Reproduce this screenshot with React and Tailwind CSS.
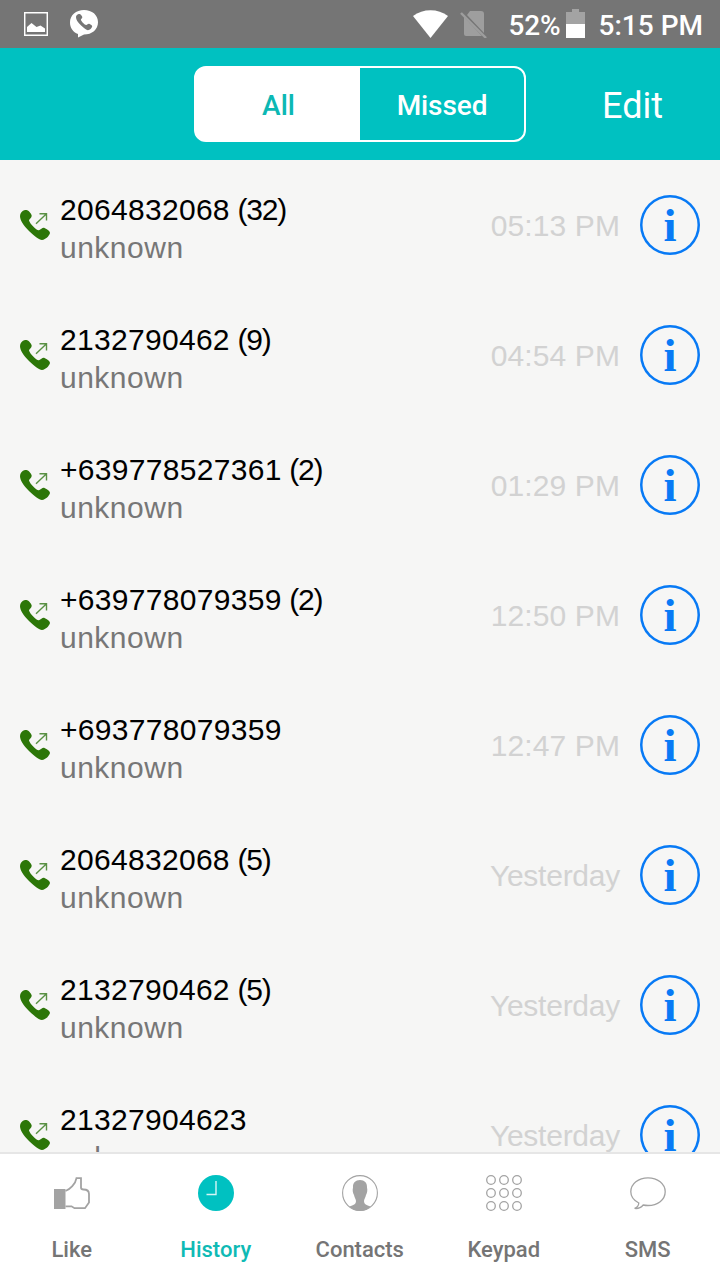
// src/App.jsx
import clsx from 'clsx'

const calls = [
  { number: '2064832068', count: 32, name: 'unknown', time: '05:13 PM' },
  { number: '2132790462', count: 9, name: 'unknown', time: '04:54 PM' },
  { number: '+639778527361', count: 2, name: 'unknown', time: '01:29 PM' },
  { number: '+639778079359', count: 2, name: 'unknown', time: '12:50 PM' },
  { number: '+693778079359', name: 'unknown', time: '12:47 PM' },
  { number: '2064832068', count: 5, name: 'unknown', time: 'Yesterday' },
  { number: '2132790462', count: 5, name: 'unknown', time: 'Yesterday' },
  { number: '21327904623', name: 'unknown', time: 'Yesterday' }
]

const HANDSET =
  'M5 0C2 .8 0 3 0 6C0 10 3 15 9 21C15 26.5 19 30 22 30C26 29.5 29 26 30 23C30 21 28 20 24.5 18C22.5 17.3 21 19.5 19 20.2C17 21 10 14 9 10.5C9.3 9 12 7.5 11.7 5.5C11 3 8 0 6.5 0Z'

function LikeIcon() {
  return (
    <svg className="h-9 w-9" viewBox="0 0 36 36" fill="none">
      <path d="M0 14h11.5v20H0z" fill="#a3a3a3" />
      <path
        d="M11.5 16C16 14.5 21.5 9 22.5 3.2H27V12.5Q27 14.5 29.5 14.5Q35 14.5 35 19V27.5L31 33.2H20.5L17.5 31.3H11.5"
        stroke="#a3a3a3"
        strokeWidth="1.8"
      />
    </svg>
  )
}

function HistoryIcon() {
  return (
    <svg className="h-9 w-9" viewBox="0 0 36 36" fill="none">
      <circle cx="18" cy="18" r="18" fill="#00c1c1" />
      <path d="M18 6v13.5H8.5" stroke="#d5f5f5" strokeWidth="1.4" />
    </svg>
  )
}

function ContactsIcon() {
  return (
    <svg className="h-9 w-9" viewBox="0 0 36 36" fill="none">
      <circle cx="18" cy="18" r="17.4" stroke="#a3a3a3" strokeWidth="1.1" />
      <path
        d="M18 5C13.5 5 10.8 7.8 11 12.5C10.2 15.5 11 18 12 20C12.5 22.5 13.8 24 14 26C13.8 29.5 11.5 30 7.5 31.5Q12 36 18 36T28.5 31.5C24.5 30 22.2 29.5 22 26C22.2 24 23.5 22.5 24 20C25 18 25.8 15.5 25 12.5C25.2 7.8 22.5 5 18 5Z"
        fill="#a3a3a3"
      />
    </svg>
  )
}

function KeypadIcon() {
  return (
    <svg className="h-9 w-9" viewBox="0 0 36 36" fill="none" stroke="#a3a3a3" strokeWidth="1.3">
      {[5, 18, 31].map(cy => [5, 18, 31].map(cx => <circle key={`${cx}-${cy}`} cx={cx} cy={cy} r="4.3" />))}
    </svg>
  )
}

function SmsIcon() {
  return (
    <svg className="h-9 w-9" viewBox="0 0 36 36" fill="none" stroke="#a3a3a3" strokeWidth="1.3">
      <path d="M18 2.8C8.5 2.8 .8 8.8 .8 16.8C.8 21.3 3.8 25.5 8.8 28C8.6 30.5 7.2 32.5 4.6 33.4C8.5 34 11.5 32 13.2 30C15 30.4 16.5 30.5 18 30.5C27.5 30.5 35.2 25 35.2 16.8C35.2 8.8 27.5 2.8 18 2.8Z" />
    </svg>
  )
}

const tabs = [
  { label: 'Like', icon: LikeIcon },
  { label: 'History', icon: HistoryIcon, active: true },
  { label: 'Contacts', icon: ContactsIcon },
  { label: 'Keypad', icon: KeypadIcon },
  { label: 'SMS', icon: SmsIcon }
]

function StatusBar() {
  return (
    <div className="flex h-12 shrink-0 items-center bg-[#757575] pr-[17px] pl-6 text-[28px] font-medium text-white">
      <svg className="h-6 w-6" viewBox="0 0 24 24" fill="none">
        <path d="M.7.7h22.6v22.6H.7z" stroke="#fff" strokeWidth="1.5" />
        <path d="M3 20v-5l4.5-4 5 4 4-1.5 4.5 3V20z" fill="#fff" />
      </svg>
      <svg className="ml-[22px] h-7 w-7" viewBox="0 0 28 28">
        <path d="M14 0C6 0 0 5 0 12.5C0 18 3 22 8 24V27.5L14 24.5C22 24.5 28 19.5 28 12.2S22 0 14 0Z" fill="#fff" />
        <path d={HANDSET} fill="#757575" transform="translate(6 4) scale(.54)" />
      </svg>
      <svg className="ml-auto h-7 w-[35px]" viewBox="0 0 35 28">
        <path d="M0 6C10-1.8 25-1.8 35 6L17.5 28z" fill="#fff" />
      </svg>
      <svg className="ml-3 h-7 w-[27px]" viewBox="0 0 27 28">
        <path d="M10 1h11q3 0 3 3v19L7 5zM4 7l18 19H6q-2 0-2-2z" fill="#9e9e9e" />
        <path d="M1 3l25 25" stroke="#9e9e9e" strokeWidth="2.4" />
      </svg>
      <span className="ml-[22px] w-[52px] pt-[3px] tracking-[-0.2px]">52%</span>
      <svg className="mb-0.5 ml-[5px] h-[29px] w-[19px]" viewBox="0 0 19 29">
        <path d="M6 0h7v3h6v12H0V3h6z" fill="#a3a3a3" />
        <path d="M0 15h19v14H0z" fill="#fff" />
      </svg>
      <span className="ml-3.5 pt-[3px]">5:15 PM</span>
    </div>
  )
}

function Header() {
  return (
    <header className="grid h-28 shrink-0 grid-cols-[194px_332px_1fr] items-center bg-[#00c1c1] text-white">
      <div className="col-start-2 grid h-[76px] grid-cols-2 overflow-hidden rounded-xl border-2 border-white bg-[linear-gradient(90deg,#fff_50%,transparent_50%)] text-[28px] font-medium">
        <button className="pt-1 pl-px text-[#0cb8b4]">All</button>
        <button className="pt-1 tracking-[-0.1px]">Missed</button>
      </div>
      <button className="pt-1 pl-[19px] text-4xl">Edit</button>
    </header>
  )
}

function InfoButton() {
  return (
    <button className="ml-5 flex h-[60px] w-[60px] items-center justify-center rounded-full inset-ring-[2.5px] inset-ring-[#087af5]">
      <span className="font-['Liberation_Serif',serif] text-[47px] leading-none font-bold text-[#087af5]">i</span>
    </button>
  )
}

function CallRow({ call }) {
  return (
    <li className="flex h-[130px] shrink-0 items-center px-5 font-['Liberation_Sans',sans-serif] text-[30px]">
      <svg className="h-[30px] w-[30px]" viewBox="0 0 30 30" fill="none">
        <path d={HANDSET} fill="#2c7608" />
        <path d="M16 13.8L26.5 3.8M19.5 3.7h7v6.8" stroke="#599043" strokeWidth="1.4" />
      </svg>
      <div className="ml-2.5 flex flex-col pt-2 leading-[38px]">
        <span className="tracking-[0.3px] text-black">
          {call.number}
          {call.count && <span className="tracking-[-1.2px] [word-spacing:0.5px]"> ({call.count})</span>}
        </span>
        <span className="tracking-[0.5px] text-[#777]">{call.name}</span>
      </div>
      <span className={clsx('ml-auto text-[#d2d2d2]', call.time === 'Yesterday' ? 'tracking-[-0.25px]' : 'tracking-[0.1px]')}>
        {call.time}
      </span>
      <InfoButton />
    </li>
  )
}

function TabBar() {
  return (
    <nav className="grid h-32 shrink-0 grid-cols-5 border-t-2 border-[#e6e6e6] bg-white">
      {tabs.map(({ label, icon: Icon, active }) => (
        <button
          key={label}
          className={clsx(
            'flex flex-col items-center pt-[21px] text-[22px] font-medium',
            active ? 'text-[#0fbab5]' : 'text-[#757575]'
          )}
        >
          <Icon />
          <span className="mt-[23px] pr-[0.5px] leading-8">{label}</span>
        </button>
      ))}
    </nav>
  )
}

export default function App() {
  return (
    <div className="flex h-screen w-full flex-col overflow-hidden bg-[#f6f6f5] font-[Roboto,sans-serif]">
      <StatusBar />
      <Header />
      <ul className="flex min-h-0 flex-1 flex-col overflow-hidden">
        {calls.map((call, i) => (
          <CallRow key={i} call={call} />
        ))}
      </ul>
      <TabBar />
    </div>
  )
}
